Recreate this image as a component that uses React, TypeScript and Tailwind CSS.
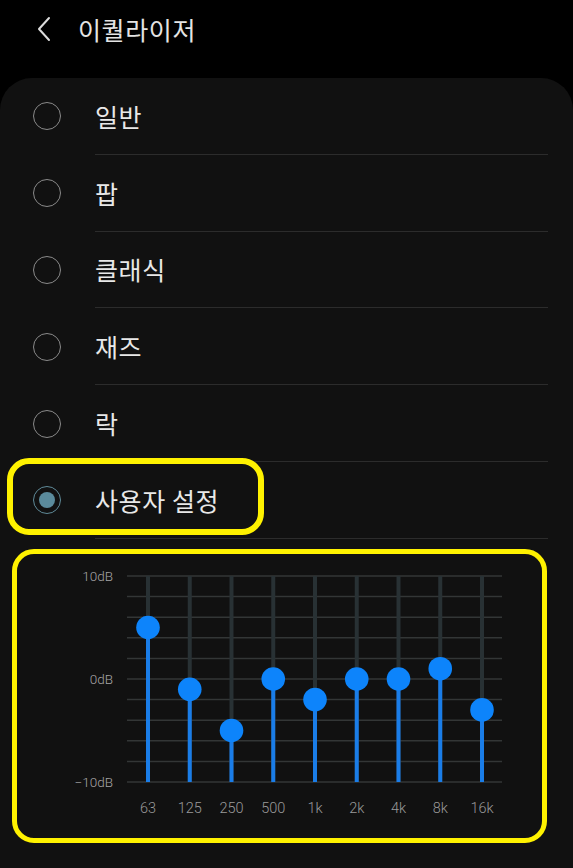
import React from "react";

const presets = ["일반", "팝", "클래식", "재즈", "락", "사용자 설정"];
const bands = ["63", "125", "250", "500", "1k", "2k", "4k", "8k", "16k"];
const values = [5, -1, -5, 0, -2, 0, 0, 1, -3];

function Chart() {
  const top = 576;
  const bottom = 782;
  const zero = 679;
  const step = 10.3;
  const xs = bands.map((_, i) => 148 + i * 41.75);
  const grid = Array.from({ length: 11 }, (_, i) => top + i * 20.6);
  return (
    <svg width="525" height="284" viewBox="17 554 525 284" className="block">
      {grid.map((y, i) => (
        <line key={i} x1={127} x2={502} y1={y} y2={y} stroke="#333636" strokeWidth={1.5} />
      ))}
      {xs.map((x, i) => {
        const ky = zero - values[i] * step;
        return (
          <g key={i}>
            <line x1={x} x2={x} y1={top} y2={bottom} stroke="#283134" strokeWidth={4} />
            <line x1={x} x2={x} y1={ky} y2={bottom} stroke="#1a7de8" strokeWidth={4} />
            <circle cx={x} cy={ky} r={11.8} fill="#0d84fb" />
            <text
              x={x}
              y={808}
              textAnchor="middle"
              dominantBaseline="central"
              fill="#9a9a9a"
              fontSize="14.5"
              fontWeight={300}
              fontFamily="Roboto, 'Noto Sans', sans-serif"
            >
              {bands[i]}
            </text>
          </g>
        );
      })}
      {[
        ["10dB", top],
        ["0dB", zero],
        ["−10dB", bottom],
      ].map(([t, y]) => (
        <text
          key={t as string}
          x={113}
          y={y as number}
          textAnchor="end"
          dominantBaseline="central"
          fill="#a6a6a6"
          fontSize="13.5"
          fontWeight={300}
          fontFamily="Roboto, 'Noto Sans', sans-serif"
        >
          {t}
        </text>
      ))}
    </svg>
  );
}

export default function App() {
  return (
    <div
      className="w-[573px] h-[868px] bg-black overflow-hidden flex flex-col"
      style={{ fontFamily: "'Noto Sans CJK KR', 'Noto Sans', sans-serif" }}
    >
      <div className="h-[78px] shrink-0 flex items-center pb-[20px]">
        <svg width="16" height="26" viewBox="0 0 16 26" className="ml-[36px]">
          <path d="M13 2 L3 13 L13 24" fill="none" stroke="#dcdcdc" strokeWidth="2" strokeLinecap="round" strokeLinejoin="round" />
        </svg>
        <span className="ml-[26px] text-[25px] text-[#e4e4e4] tracking-[0.6px] leading-none">이퀄라이저</span>
      </div>
      <div className="flex-1 bg-[#111111] rounded-t-[32px] flex flex-col">
        {presets.map((p, i) => {
          const selected = i === presets.length - 1;
          return (
            <div key={p} className="relative h-[76.8px] shrink-0 flex items-center">
              <div className="ml-[33px] w-[28px] h-[28px] shrink-0 flex items-center justify-center">
                {selected ? (
                  <div className="w-[28px] h-[28px] rounded-full border-[1.5px] border-[#5f8a98] flex items-center justify-center">
                    <div className="w-[16px] h-[16px] rounded-full bg-[#5b8b9c]" />
                  </div>
                ) : (
                  <div className="w-[28px] h-[28px] rounded-full border-[1.5px] border-[#8a8a8a]" />
                )}
              </div>
              <span className="ml-[34px] text-[25px] text-[#e8e8e8] leading-none tracking-[0.6px]">{p}</span>
              <div className="absolute left-[95px] right-[25px] bottom-0 h-px bg-[#2c2c2c]" />
              {selected && (
                <div className="absolute left-[7px] top-[-4px] w-[257px] h-[77px] rounded-[22px] border-[6px] border-[#fff200]" />
              )}
            </div>
          );
        })}
        <div className="mt-[10px] ml-[12px] w-[535px] h-[294px] rounded-[22px] border-[5px] border-[#fff200] overflow-hidden">
          <Chart />
        </div>
      </div>
    </div>
  );
}
